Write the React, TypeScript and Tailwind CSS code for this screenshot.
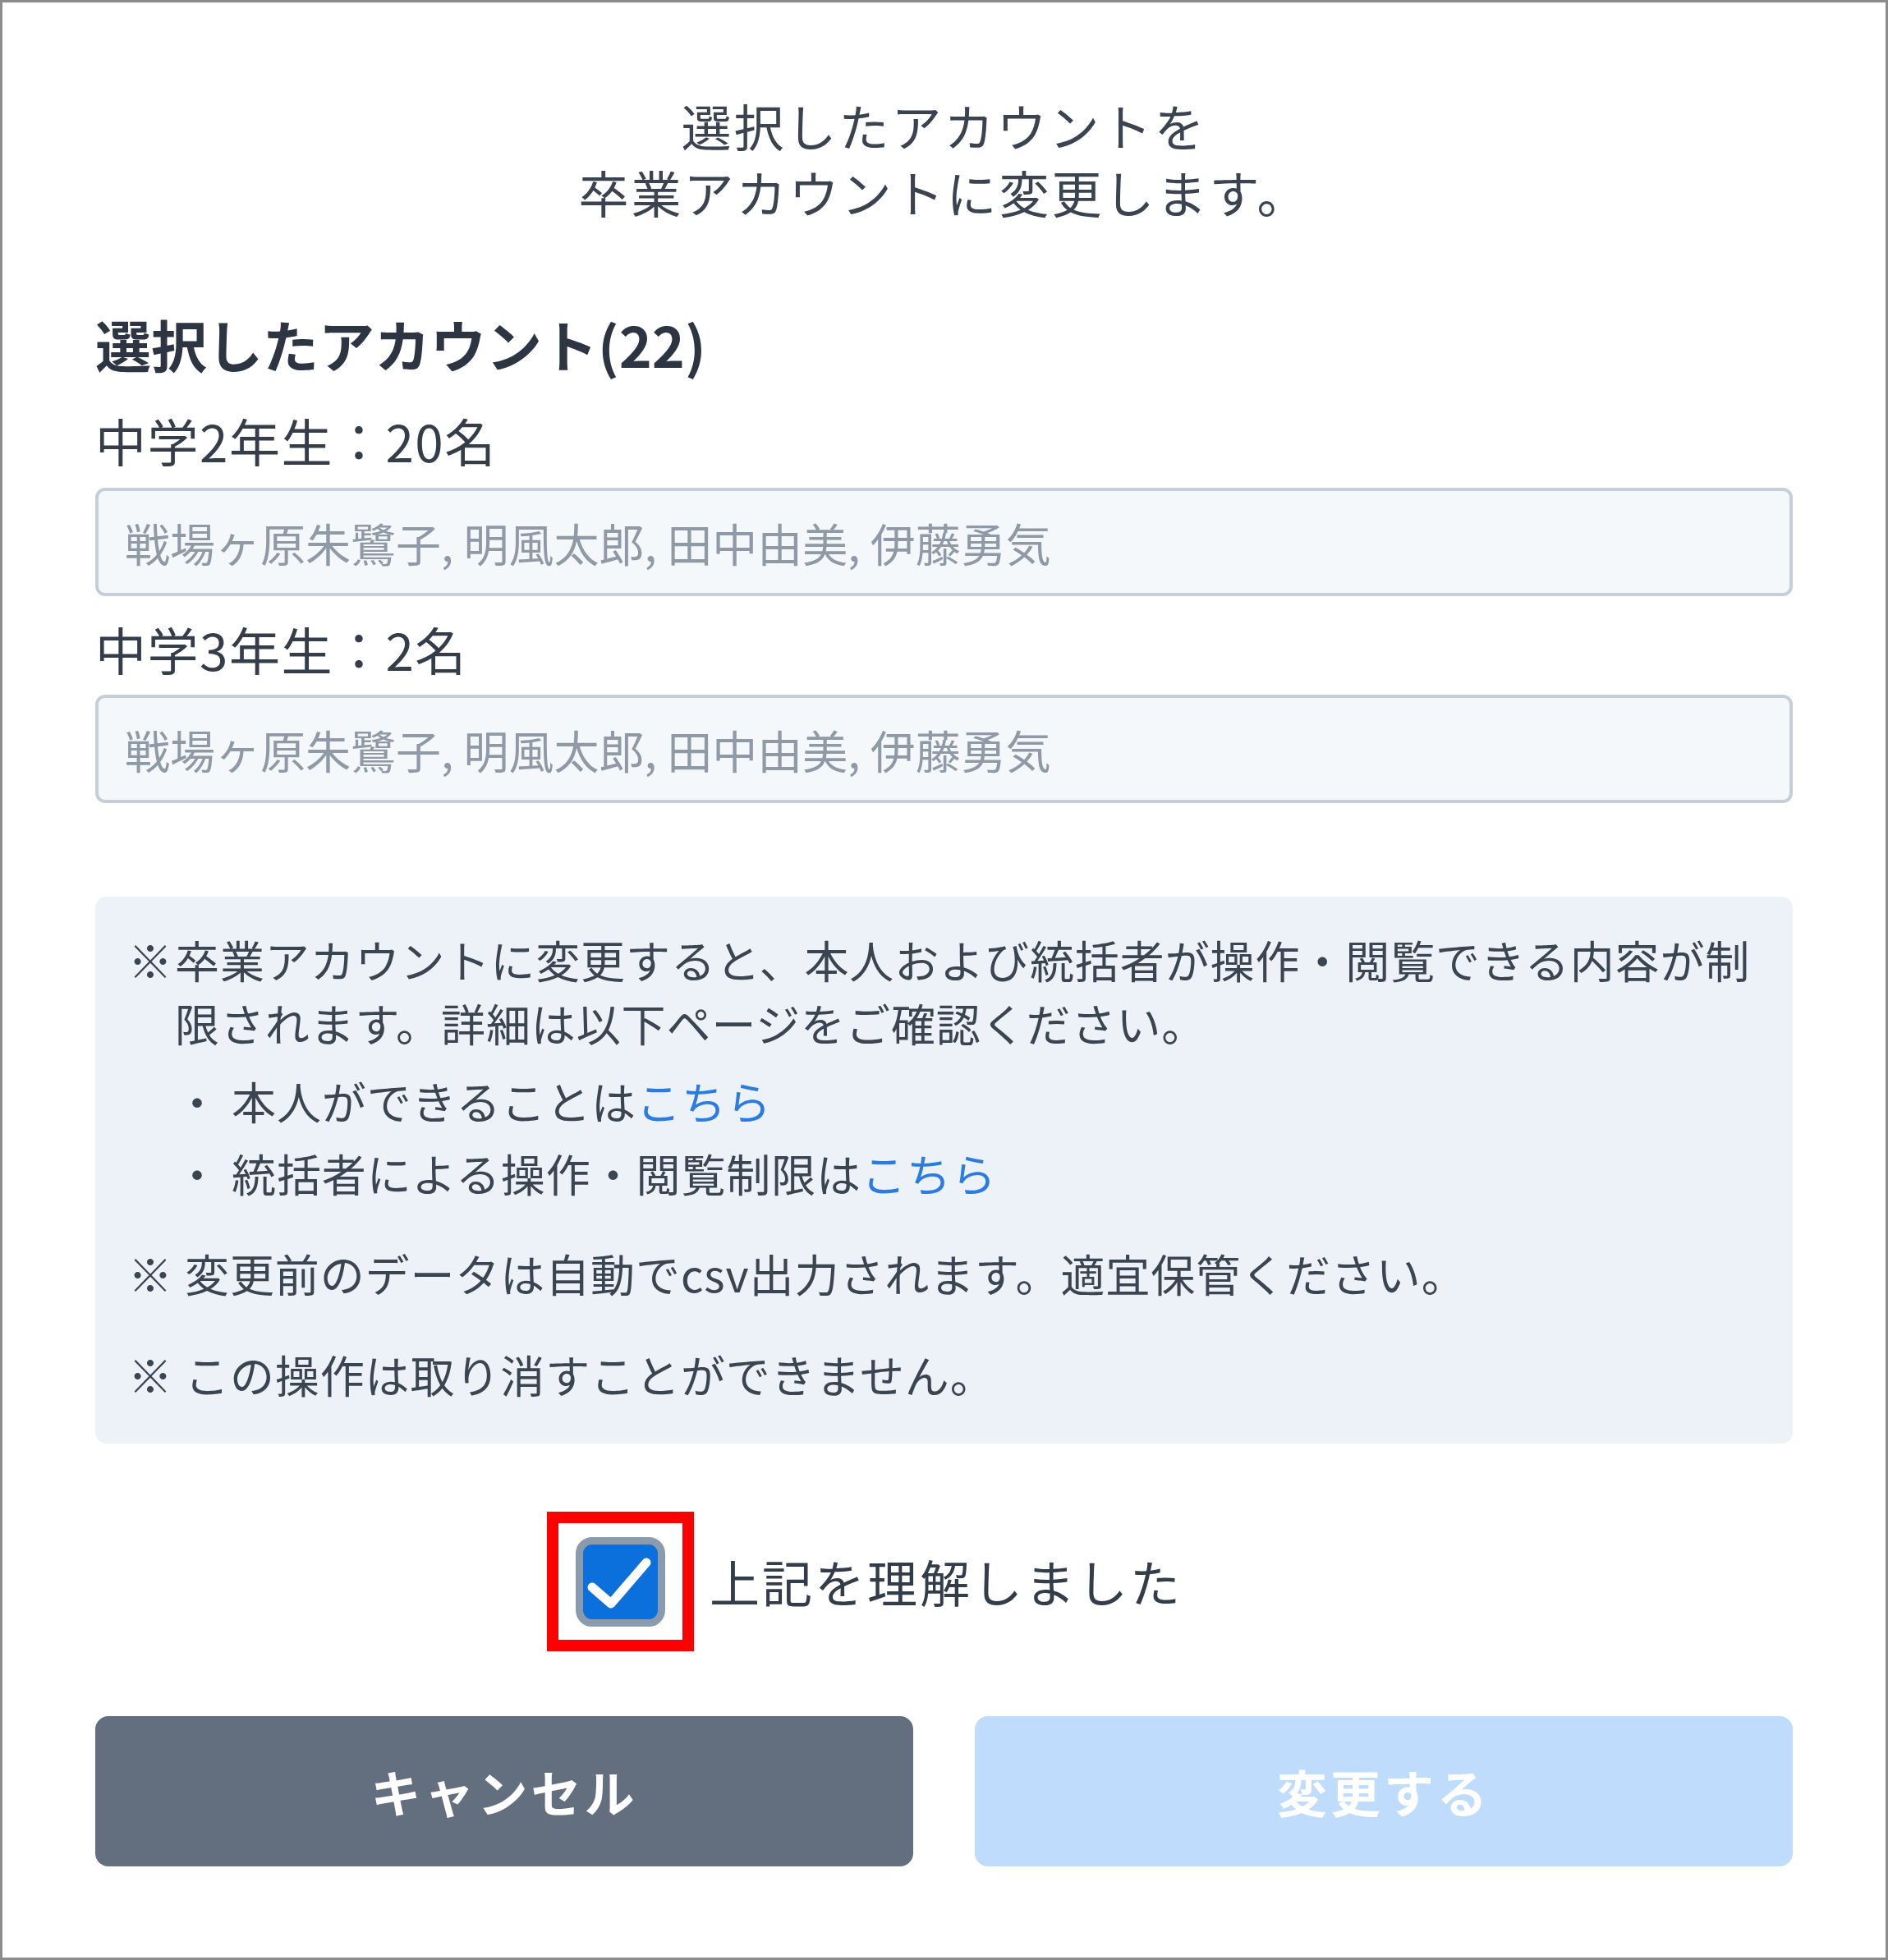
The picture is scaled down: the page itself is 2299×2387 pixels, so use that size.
export default function App() {
  const names = "戦場ヶ原朱鷺子, 明風太郎, 田中由美, 伊藤勇気"

  return (
    <div className="flex h-[2387px] w-[2299px] flex-col border-[3px] border-[#8c8c8c] bg-white px-[113px] pt-[109px] font-['Noto_Sans_CJK_JP',sans-serif]">
      {/* Title */}
      <p className="text-center text-[61px] leading-[81px] tracking-[3px] text-[#3a434f]">
        選択したアカウントを
        <br />
        卒業アカウントに変更します。
      </p>

      {/* Selected accounts */}
      <h2 className="mt-[95px] text-[68px] font-bold leading-[100px] text-[#2c3541]">選択したアカウント(22)</h2>

      <div className="mt-[21px] text-[62px] leading-[92px] tracking-[1.5px] text-[#343d49]">中学2年生：20名</div>
      <div className="mt-[12px] flex h-[132px] items-center rounded-[12px] border-[4px] border-[#c6cfd9] bg-[#f5f8fb] pl-[32px] text-[55px] text-[#8f9aa6]">
        {names}
      </div>

      <div className="mt-[18px] text-[62px] leading-[92px] tracking-[1.5px] text-[#343d49]">中学3年生：2名</div>
      <div className="mt-[10px] flex h-[132px] items-center rounded-[12px] border-[4px] border-[#c6cfd9] bg-[#f5f8fb] pl-[32px] text-[55px] text-[#8f9aa6]">
        {names}
      </div>

      {/* Notice */}
      <div className="mt-[114px] rounded-[14px] bg-[#edf1f8] pb-[46px] pl-[40px] pr-[20px] pt-[38px] text-[54px] leading-[77px] tracking-[0.9px] text-[#3b4551]">
        <div className="flex">
          <span className="w-[57px] shrink-0 font-bold">※</span>
          <span>
            卒業アカウントに変更すると、本人および統括者が操作・閲覧できる内容が制
            <br />
            限されます。詳細は以下ページをご確認ください。
          </span>
        </div>
        <ul className="mt-[18px] flex flex-col gap-[11px] pl-[57px]">
          <li className="flex">
            <span className="w-[69px] shrink-0">・</span>
            <span>
              本人ができることは<span className="text-[#2a7be2]">こちら</span>
            </span>
          </li>
          <li className="flex">
            <span className="w-[69px] shrink-0">・</span>
            <span>
              統括者による操作・閲覧制限は<span className="text-[#2a7be2]">こちら</span>
            </span>
          </li>
        </ul>
        <div className="mt-[45px] flex">
          <span className="w-[69px] shrink-0 font-bold">※</span>
          <span>変更前のデータは自動でcsv出力されます。適宜保管ください。</span>
        </div>
        <div className="mt-[46px] flex">
          <span className="w-[69px] shrink-0 font-bold">※</span>
          <span>この操作は取り消すことができません。</span>
        </div>
      </div>

      {/* Confirmation */}
      <div className="mt-[83px] flex h-[170px] items-center">
        <div className="ml-[550px] flex h-[170px] w-[179px] items-center justify-center border-[14px] border-[#ff0000]">
          <div className="h-[109px] w-[109px] rounded-[20px] border-[9px] border-[#8a9bae] bg-[#0b6fdc]">
            <svg viewBox="0 0 91 91" className="h-full w-full">
              <path
                d="M11 52 L34 72 L77 22"
                fill="none"
                stroke="#ffffff"
                strokeWidth="11"
                strokeLinecap="round"
                strokeLinejoin="round"
              />
            </svg>
          </div>
        </div>
        <span className="ml-[19px] text-[61px] tracking-[3px] text-[#333d49]">上記を理解しました</span>
      </div>

      {/* Buttons */}
      <div className="mt-[79px] grid grid-cols-2 gap-[75px]">
        <button className="flex h-[183px] items-center justify-center rounded-[16px] bg-[#636f7f] text-[61px] font-bold tracking-[4px] text-white">
          キャンセル
        </button>
        <button className="flex h-[183px] items-center justify-center rounded-[16px] bg-[#bfdcfd] text-[61px] font-bold tracking-[4px] text-white">
          変更する
        </button>
      </div>
    </div>
  )
}
